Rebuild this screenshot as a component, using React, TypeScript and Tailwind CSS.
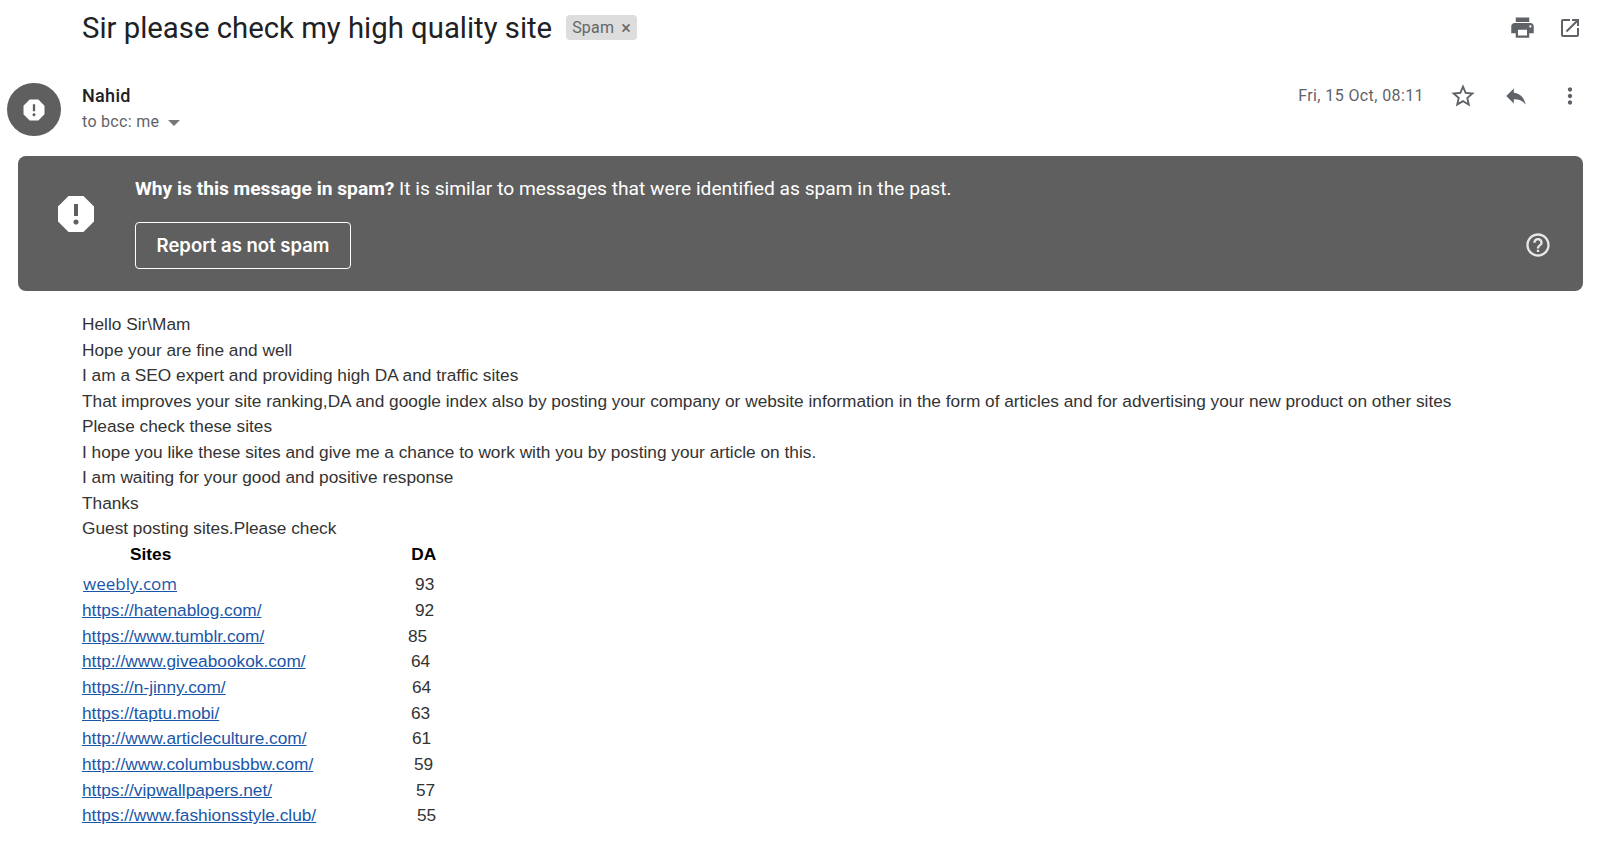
const ICONS = {
  print: "M19 8H5c-1.66 0-3 1.34-3 3v6h4v4h12v-4h4v-6c0-1.66-1.34-3-3-3zm-3 11H8v-5h8v5zm3-7c-.55 0-1-.45-1-1s.45-1 1-1 1 .45 1 1-.45 1-1 1zm-1-9H6v4h12V3z",
  open: "M19 19H5V5h7V3H5c-1.11 0-2 .9-2 2v14c0 1.1.89 2 2 2h14c1.1 0 2-.9 2-2v-7h-2v7zM14 3v2h3.59l-9.83 9.83 1.41 1.41L19 6.41V10h2V3h-7z",
  star: "M22 9.24l-7.19-.62L12 2 9.19 8.63 2 9.24l5.46 4.73L5.82 21 12 17.27 18.18 21l-1.63-7.03L22 9.24zM12 15.4l-3.76 2.27 1-4.28-3.32-2.88 4.38-.38L12 6.1l1.71 4.04 4.38.38-3.32 2.88 1 4.28L12 15.4z",
  reply: "M10 9V5l-7 7 7 7v-4.1c5 0 8.5 1.6 11 5.1-1-5-4-10-11-11z",
  more: "M12 8c1.1 0 2-.9 2-2s-.9-2-2-2-2 .9-2 2 .9 2 2 2zm0 2c-1.1 0-2 .9-2 2s.9 2 2 2 2-.9 2-2-.9-2-2-2zm0 6c-1.1 0-2 .9-2 2s.9 2 2 2 2-.9 2-2-.9-2-2-2z",
  help: "M11 18h2v-2h-2v2zm1-16C6.48 2 2 6.48 2 12s4.48 10 10 10 10-4.48 10-10S17.52 2 12 2zm0 18c-4.41 0-8-3.59-8-8s3.59-8 8-8 8 3.59 8 8-3.59 8-8 8zm0-14c-2.21 0-4 1.79-4 4h2c0-1.1.9-2 2-2s2 .9 2 2c0 2-3 1.75-3 5h2c0-2.25 3-2.5 3-5 0-2.21-1.79-4-4-4z",
  report: "M15.73 3H8.27L3 8.27v7.46L8.27 21h7.46L21 15.73V8.27L15.73 3zM12 17.3c-.72 0-1.3-.58-1.3-1.3 0-.72.58-1.3 1.3-1.3.72 0 1.3.58 1.3 1.3 0 .72-.58 1.3-1.3 1.3zm1-4.3h-2V7h2v6z",
};

function Icon({ d, className }: { d: string; className: string }) {
  return (
    <svg viewBox="0 0 24 24" fill="currentColor" className={className}>
      <path d={d} />
    </svg>
  );
}

const BODY = [
  "Hello Sir\\Mam",
  "Hope your are fine and well",
  "I am a SEO expert and providing high DA and traffic sites",
  "That improves your site ranking,DA and google index also by posting your company or website information in the form of articles and for advertising your new product on other sites",
  "Please check these sites",
  "I hope you like these sites and give me a chance to work with you by posting your article on this.",
  "I am waiting for your good and positive response",
  "Thanks",
  "Guest posting sites.Please check",
];

const SITES = [
  { url: "https://hatenablog.com/", da: "92", pad: "pl-[333px]" },
  { url: "https://www.tumblr.com/", da: "85", pad: "pl-[326px]" },
  { url: "http://www.giveabookok.com/", da: "64", pad: "pl-[329px]" },
  { url: "https://n-jinny.com/", da: "64", pad: "pl-[330px]" },
  { url: "https://taptu.mobi/", da: "63", pad: "pl-[329px]" },
  { url: "http://www.articleculture.com/", da: "61", pad: "pl-[330px]" },
  { url: "http://www.columbusbbw.com/", da: "59", pad: "pl-[332px]" },
  { url: "https://vipwallpapers.net/", da: "57", pad: "pl-[334px]" },
  { url: "https://www.fashionsstyle.club/", da: "55", pad: "pl-[335px]" },
];

export default function App() {
  return (
    <div className="h-[855px] overflow-hidden bg-white font-['Roboto',sans-serif] text-[#222]">
      {/* Subject */}
      <div className="flex h-[55px] items-center pl-[82px] pr-[18px]">
        <h1 className="text-[29.3px] leading-[36px] text-[#202124]">Sir please check my high quality site</h1>
        <span className="ml-[14px] flex h-[25px] items-center gap-[7px] rounded-[4px] bg-[#dddddd] px-[6px] text-[16px] tracking-[0.2px] text-[#666]">
          Spam
          <span className="text-[18px] leading-none">×</span>
        </span>
        <div className="ml-auto flex items-center gap-[22px] text-[#5f6368]">
          <Icon d={ICONS.print} className="h-[27px] w-[27px]" />
          <Icon d={ICONS.open} className="h-[24px] w-[24px]" />
        </div>
      </div>

      {/* Sender */}
      <div className="mt-[28px] flex h-[53px] pl-[7px] pr-[17px]">
        <div className="flex h-[53px] w-[54px] items-center justify-center rounded-full bg-[#5f5f5f]">
          <Icon d={ICONS.report} className="h-[28px] w-[28px] text-white" />
        </div>
        <div className="ml-[21px] pt-[2px]">
          <div className="text-[18px] font-medium leading-[22px] tracking-[0.3px] text-[#202124]">Nahid</div>
          <div className="mt-[4px] flex items-center text-[16px] leading-[22px] tracking-[0.3px] text-[#5f6368]">
            to bcc: me
            <span className="ml-[9px] mt-[2px] h-0 w-0 border-x-[6px] border-t-[6px] border-x-transparent border-t-[#777]" />
          </div>
        </div>
        <div className="ml-auto flex h-[25px] items-center text-[#5f6368]">
          <span className="text-[16px] tracking-[0.4px]">Fri, 15 Oct, 08:11</span>
          <Icon d={ICONS.star} className="ml-[25px] h-[28px] w-[28px]" />
          <Icon d={ICONS.reply} className="ml-[26px] h-[26px] w-[26px]" />
          <Icon d={ICONS.more} className="ml-[28px] h-[26px] w-[26px]" />
        </div>
      </div>

      {/* Spam banner */}
      <div className="ml-[18px] mr-[17px] mt-[20px] flex h-[135px] rounded-[8px] bg-[#5f5f5f] text-white">
        <div className="w-[117px] pl-[34px] pt-[34px]">
          <Icon d={ICONS.report} className="h-[48px] w-[48px]" />
        </div>
        <div className="flex flex-1 flex-col pt-[20px]">
          <p className="text-[19.2px] leading-[26px]">
            <b className="font-bold">Why is this message in spam?</b> It is similar to messages that were identified as spam in the past.
          </p>
          <button className="mt-[20px] h-[47px] w-[216px] rounded-[4px] border border-white font-['Inter',sans-serif] text-[18.5px] font-semibold">
            Report as not spam
          </button>
        </div>
        <div className="flex w-[64px] items-end pb-[32px] pl-[5px]">
          <Icon d={ICONS.help} className="h-[28px] w-[28px] text-[#e8e8e8]" />
        </div>
      </div>

      {/* Message */}
      <div className="mt-[21px] pl-[82px] font-['Liberation_Sans',sans-serif] text-[17.27px] leading-[25.55px] text-[#333]">
        {BODY.map((line) => (
          <p key={line}>{line}</p>
        ))}
        <div className="flex font-bold text-black">
          <span className="pl-[48px]">Sites</span>
          <span className="ml-[240px]">DA</span>
        </div>
        <div className="mt-[5px] flex leading-[25.7px]">
          <a className="-mt-[1px] pl-[1px] font-['Open_Sans',sans-serif] text-[17px] text-[#1a56a8] underline">weebly.com</a>
          <span className="ml-[238px]">93</span>
        </div>
        {SITES.map((site) => (
          <div key={site.url} className="relative leading-[25.65px]">
            <a className="absolute left-0 text-[#1a56a8] underline">{site.url}</a>
            <div className={site.pad}>{site.da}</div>
          </div>
        ))}
      </div>
    </div>
  );
}
